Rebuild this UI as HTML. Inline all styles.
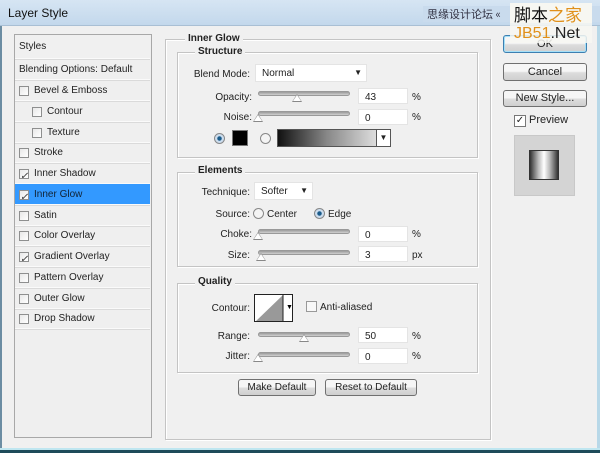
<!DOCTYPE html>
<html><head><style>
*{margin:0;padding:0;box-sizing:border-box}
body{width:600px;height:453px;overflow:hidden;background:#f0f0f0;font-family:"Liberation Sans",Tahoma,sans-serif;font-size:10px;color:#222;position:relative}
.a{position:absolute}
.title{left:0;top:0;width:600px;height:26px;background:linear-gradient(#d6e5f3,#c3d8ec);border-bottom:1px solid #a9bfd4}
.fs{position:absolute;border:1px solid #c4c4c4;box-shadow:inset 1px 1px 0 #fff,1px 1px 0 #fff}
.lg{position:absolute;background:#f0f0f0;font-weight:bold;padding:0 3px;font-size:10px}
.lbl{position:absolute;text-align:right;font-size:10px}
.inp{position:absolute;background:#fff;border:1px solid #e4e4e4;font-size:10px;padding:3px 0 0 6px}
.sl{position:absolute;height:5px;border:1px solid #999;border-radius:3px;background:linear-gradient(#9a9a9a,#d0d0d0)}
.th{position:absolute;width:0;height:0;border-left:5px solid transparent;border-right:5px solid transparent;border-bottom:8px solid #888}
.th:after{content:"";position:absolute;left:-4px;top:1px;border-left:4px solid transparent;border-right:4px solid transparent;border-bottom:6px solid #fff}
.btn{position:absolute;border:1px solid #707070;border-radius:3px;background:linear-gradient(#f6f6f6 45%,#dcdcdc 55%,#cfcfcf);text-align:center;font-size:11px}
.row{position:absolute;left:15px;width:135px;height:21px;border-bottom:1px solid #fafafa;box-shadow:0 1px 0 #dadada;font-size:10px;padding-left:19px;line-height:22px}
.cb{position:absolute;left:4px;top:6px;width:10px;height:10px;border:1px solid #8e8f8f;background:linear-gradient(135deg,#e8e8e8,#fff)}
.ck:after{content:"✓";position:absolute;left:0;top:-4px;font-size:10px;color:#333}
.rad{position:absolute;width:11px;height:11px;border-radius:50%;border:1px solid #888;background:#f4f4f4}
</style></head><body>
<div class="a title"></div>
<div class="a" style="left:8px;top:6px;font-size:12px;color:#111">Layer Style</div>
<div class="a" style="left:0;top:26px;width:2px;height:427px;background:#6c8da3"></div>
<div class="a" style="left:597px;top:26px;width:3px;height:427px;background:#b8d8e8"></div>
<div class="a" style="left:0;top:448px;width:600px;height:2px;background:#bfe6f0"></div>
<div class="a" style="left:0;top:450px;width:600px;height:3px;background:#1e4b5a"></div>
<!-- right buttons -->
<div class="btn" style="left:503px;top:35px;width:84px;height:18px;border-color:#3c7fb1;box-shadow:inset 0 0 0 1px #a6e0f8;line-height:16px">OK</div>
<div class="btn" style="left:503px;top:63px;width:84px;height:18px;line-height:16px">Cancel</div>
<div class="btn" style="left:503px;top:90px;width:84px;height:17px;line-height:15px">New Style...</div>
<!-- watermark -->
<div class="a" style="left:423px;top:6px;width:177px;height:16px;background:#c9dbed;font-family:'Noto Sans CJK SC',sans-serif;font-size:11px;color:#334;padding-left:4px">思缘设计论坛 «</div>
<div class="a" style="left:510px;top:3px;width:82px;height:20px;background:#f7f7f2"></div>
<div class="a" style="left:510px;top:23px;width:82px;height:20px;background:rgba(247,247,242,0.85)"></div>
<div class="a" style="left:514px;top:3px;font-family:'Noto Sans CJK SC',sans-serif;font-size:17px;line-height:22px;color:#111">脚本<span style="color:#e0901a">之家</span></div>
<div class="a" style="left:514px;top:25px;font-size:16px;color:#222"><span style="color:#e0901a">JB51</span>.Net</div>

<!-- left panel -->
<div class="a" style="left:14px;top:34px;width:138px;height:404px;border:1px solid #a8a8a8;background:#efefef"></div>
<div class="row" style="top:35px;height:24px;padding-left:4px;line-height:24px;background:#f0f0f0">Styles</div>
<div class="row" style="top:59px;padding-left:4px">Blending Options: Default</div>
<div class="row" style="top:80px"><i class="cb"></i>Bevel &amp; Emboss</div>
<div class="row" style="top:101px;padding-left:32px"><i class="cb" style="left:17px"></i>Contour</div>
<div class="row" style="top:122px;padding-left:32px"><i class="cb" style="left:17px"></i>Texture</div>
<div class="row" style="top:142px"><i class="cb"></i>Stroke</div>
<div class="row" style="top:163px"><i class="cb ck"></i>Inner Shadow</div>
<div class="row" style="top:184px;background:#3399ff;color:#123"><i class="cb ck"></i>Inner Glow</div>
<div class="row" style="top:205px"><i class="cb"></i>Satin</div>
<div class="row" style="top:225px"><i class="cb"></i>Color Overlay</div>
<div class="row" style="top:246px"><i class="cb ck"></i>Gradient Overlay</div>
<div class="row" style="top:267px"><i class="cb"></i>Pattern Overlay</div>
<div class="row" style="top:288px"><i class="cb"></i>Outer Glow</div>
<div class="row" style="top:308px"><i class="cb"></i>Drop Shadow</div>

<!-- main -->
<div class="fs" style="left:165px;top:39px;width:326px;height:401px"></div>
<div class="lg" style="left:185px;top:33px">Inner Glow</div>
<div class="fs" style="left:177px;top:52px;width:301px;height:106px"></div>
<div class="lg" style="left:195px;top:46px">Structure</div>
<div class="lbl" style="left:180px;width:70px;top:69px">Blend Mode:</div>
<div class="inp" style="left:255px;top:64px;width:112px;height:18px">Normal<span class="a" style="right:4px;top:3px;font-size:8px">▼</span></div>
<div class="lbl" style="left:180px;width:72px;top:92px">Opacity:</div>
<div class="sl" style="left:258px;top:91px;width:92px"></div><div class="th" style="left:292px;top:94px"></div>
<div class="inp" style="left:358px;top:88px;width:50px;height:16px">43</div>
<div class="a" style="left:412px;top:92px">%</div>
<div class="lbl" style="left:180px;width:72px;top:112px">Noise:</div>
<div class="sl" style="left:258px;top:111px;width:92px"></div><div class="th" style="left:253px;top:114px"></div>
<div class="inp" style="left:358px;top:109px;width:50px;height:16px">0</div>
<div class="a" style="left:412px;top:112px">%</div>
<div class="rad" style="left:214px;top:133px;background:radial-gradient(#1a5b8a 30%,#cde 40%)"></div>
<div class="a" style="left:232px;top:130px;width:16px;height:16px;background:#000;border:1px solid #777"></div>
<div class="rad" style="left:260px;top:133px"></div>
<div class="a" style="left:277px;top:129px;width:100px;height:18px;border:1px solid #555;background:linear-gradient(90deg,#111,#888 50%,#ddd)"></div>
<div class="a" style="left:376px;top:129px;width:15px;height:18px;border:1px solid #555;background:#fff;font-size:8px;text-align:center;line-height:16px">▼</div>

<div class="fs" style="left:177px;top:172px;width:301px;height:95px"></div>
<div class="lg" style="left:195px;top:165px">Elements</div>
<div class="lbl" style="left:180px;width:70px;top:187px">Technique:</div>
<div class="inp" style="left:254px;top:182px;width:59px;height:18px">Softer<span class="a" style="right:4px;top:3px;font-size:8px">▼</span></div>
<div class="lbl" style="left:180px;width:70px;top:209px">Source:</div>
<div class="rad" style="left:253px;top:208px"></div><div class="a" style="left:267px;top:209px">Center</div>
<div class="rad" style="left:314px;top:208px;background:radial-gradient(#1a5b8a 30%,#cde 40%)"></div><div class="a" style="left:328px;top:209px">Edge</div>
<div class="lbl" style="left:180px;width:72px;top:229px">Choke:</div>
<div class="sl" style="left:258px;top:229px;width:92px"></div><div class="th" style="left:253px;top:232px"></div>
<div class="inp" style="left:358px;top:226px;width:50px;height:16px">0</div>
<div class="a" style="left:412px;top:229px">%</div>
<div class="lbl" style="left:180px;width:70px;top:250px">Size:</div>
<div class="sl" style="left:258px;top:250px;width:92px"></div><div class="th" style="left:256px;top:253px"></div>
<div class="inp" style="left:358px;top:246px;width:50px;height:16px">3</div>
<div class="a" style="left:412px;top:250px">px</div>

<div class="fs" style="left:177px;top:283px;width:301px;height:90px"></div>
<div class="lg" style="left:195px;top:276px">Quality</div>
<div class="lbl" style="left:180px;width:70px;top:303px">Contour:</div>
<div class="a" style="left:254px;top:294px;width:39px;height:28px;border:1px solid #222;background:#fff;overflow:hidden"><svg width="39" height="28"><polygon points="0,27 28,0 28,27" fill="#999"/><line x1="28" y1="0" x2="28" y2="28" stroke="#222"/><text x="31" y="14" font-size="7">▼</text></svg></div>
<div class="a" style="left:306px;top:301px;width:11px;height:11px;border:1px solid #999;background:#f8f8f8"></div>
<div class="a" style="left:320px;top:302px">Anti-aliased</div>
<div class="lbl" style="left:180px;width:70px;top:331px">Range:</div>
<div class="sl" style="left:258px;top:332px;width:92px"></div><div class="th" style="left:299px;top:334px"></div>
<div class="inp" style="left:358px;top:327px;width:50px;height:16px">50</div>
<div class="a" style="left:412px;top:331px">%</div>
<div class="lbl" style="left:180px;width:70px;top:351px">Jitter:</div>
<div class="sl" style="left:258px;top:352px;width:92px"></div><div class="th" style="left:253px;top:354px"></div>
<div class="inp" style="left:358px;top:348px;width:50px;height:16px">0</div>
<div class="a" style="left:412px;top:351px">%</div>
<div class="btn" style="left:238px;top:379px;width:78px;height:17px;font-size:10px;line-height:15px">Make Default</div>
<div class="btn" style="left:325px;top:379px;width:92px;height:17px;font-size:10px;line-height:15px">Reset to Default</div>

<div class="a" style="left:514px;top:115px;width:12px;height:12px;border:1px solid #777;background:#fff;font-size:10px;line-height:9px;text-align:center">✓</div>
<div class="a" style="left:529px;top:114px;font-size:11px">Preview</div>
<div class="a" style="left:514px;top:135px;width:61px;height:61px;background:#d4d4d4;border:1px solid #c8c8c8"></div>
<div class="a" style="left:529px;top:150px;width:30px;height:30px;border:1px solid #333;background:linear-gradient(90deg,#333,#bbb 30%,#fff 50%,#bbb 70%,#333)"></div>
</body></html>
